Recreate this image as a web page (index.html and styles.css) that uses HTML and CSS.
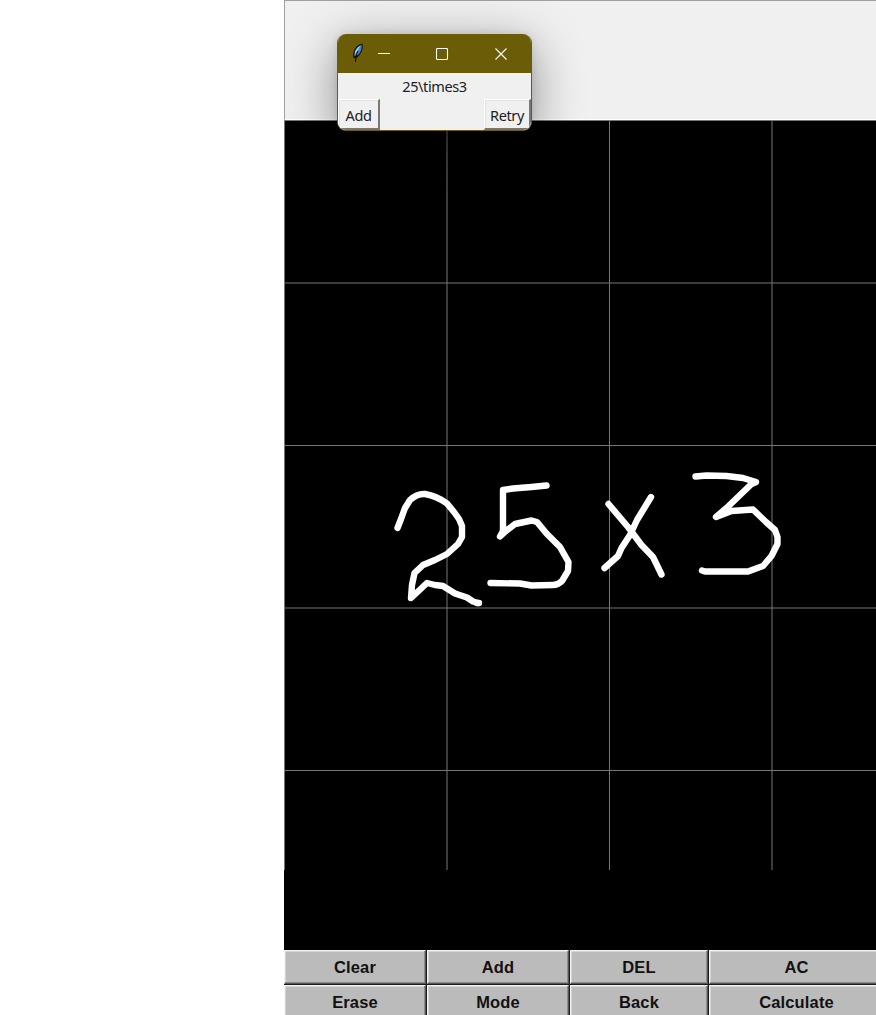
FILE: index.html
```
<!DOCTYPE html>
<html lang="en">
<head>
<meta charset="utf-8">
<title>Handwriting calculator</title>
<link rel="stylesheet" href="styles.css">
</head>
<body>
<main class="app">
  <header class="display"></header>
  <svg class="board" viewBox="284 120 592 830" aria-label="Drawing board">
    <path class="grid" d="M284.5 121V870M447 121V870M609.5 121V870M772 121V870M284 120.5H876M284 283H876M284 445.5H876M284 608H876M284 770.5H876"/>
    <g class="ink">
      <path d="M397.500 528L401 519L405 508L410 500Q417 493.500 425 494Q437 496 447 503.500L454 512L459 519L462 526V537L458 544L447 554L435 560L423 565L414.500 573L412 585L411 598L427 583L435 585L443 586L455 593.500L467 597.500L473 601.500L478 603"/>
      <path d="M546.500 485.500L531.500 487L513 488.500L503 490V531L500 536.500L506 531L515 524L531.500 520.500L537 522L546.500 533.500L560 547L568.500 562L568 571L562 581Q558 585 553 585L531.500 585.500L520 583.500L490.500 583"/>
      <path d="M608.500 504L628 527L641.500 545L653 557L661.500 574.500M651 497L637 520L630 535L621.500 548L618 556L604.500 568"/>
      <path d="M695.500 476.500L706.500 475.500L726.500 476L743 478L756 482L751.500 484L726.500 508L716 517L731.500 511L753 509.500L766 522L775 530L777.500 537V544L771.500 556L763 566L748 571.500H705L702 570.500"/>
      <path d="M477 603H479"/>
    </g>
  </svg>
  <div class="keys">
    <button class="key">Clear</button><button class="key">Add</button><button class="key">DEL</button><button class="key">AC</button>
    <button class="key">Erase</button><button class="key">Mode</button><button class="key">Back</button><button class="key">Calculate</button>
  </div>
</main>
<section class="dialog">
  <div class="titlebar">
    <svg class="feather" viewBox="0 0 14 22">
      <path d="M2.500 16C1.500 11 3 7 6 4Q8.500 1.500 11.500 1.500Q12.800 7 9 12.500Q7 15.500 4.500 16.500Z" fill="#17160d"/>
      <path d="M3.500 14Q3 9 6 6Q8.500 3 10.800 3Q11 8 8 12Q6 14 3.500 14Z" fill="#4a86cc"/>
      <path d="M3.800 12.500Q3.500 9 6.500 6L9.500 3.500Q7 8 3.800 12.500Z" fill="#b8dcf4"/>
      <path d="M7 9Q5 12 4.500 20" fill="none" stroke="#10130f" stroke-width="1.100"/>
    </svg>
    <svg class="controls" viewBox="0 0 130 12">
      <path d="M0 5.500H12"/>
      <rect x="58.500" y=".5" width="11" height="11" rx="1"/>
      <path d="M117.500 .5L128.500 11.500M128.500 .5L117.500 11.500"/>
    </svg>
  </div>
  <div class="result">25\times3</div>
  <div class="actions">
    <button class="action add">Add</button>
    <button class="action retry">Retry</button>
  </div>
</section>
</body>
</html>
```
FILE: styles.css
```
* { box-sizing: border-box; }
body { margin: 0; width: 876px; height: 1015px; overflow: hidden; background: #fff; }
.app { margin-left: 284px; width: 592px; height: 1015px; overflow: hidden; background: #000; }
.display { height: 120px; background: #f0f0f0; border: solid #a0a0a0; border-width: 1px 0 0 1px; border-bottom: 1px solid #fff; }
.board { display: block; width: 592px; height: 830px; background: #000; }
.grid { fill: none; stroke: #777; stroke-width: 1; }
.ink { fill: none; stroke: #fff; stroke-width: 6.4; stroke-linecap: round; stroke-linejoin: round; }
.keys { display: grid; width: 601px; grid-template-columns: 143px 143px 139px 176px; grid-template-rows: 35px 35px; background: #1b1b1b; }
.key {
  margin: 0 1px 1px 0; padding: 1px 0 0;
  border: solid 1px; border-color: #f4f4f4 #555 #555 #f4f4f4;
  box-shadow: inset -1px -1px #8c8c8c, inset 1px 1px #d5d5d5;
  background: #bbb; color: #111;
  font: bold 16.5px "Liberation Sans", Arial, sans-serif; letter-spacing: .15px;
}
.dialog {
  position: absolute; left: 337px; top: 34px; width: 195px; height: 97px;
  border: 1px solid #6b5d08; border-top: 0; border-radius: 9px; overflow: hidden;
  background: #f0f0f0; box-shadow: 0 12px 50px rgba(0,0,0,.42), 0 0 8px rgba(0,0,0,.1);
}
.titlebar { display: flex; align-items: center; height: 39px; padding: 1px 0 0 13px; background: #6b5d08; }
.feather { width: 14px; height: 22px; margin-top: -3px; }
.controls { width: 130px; height: 12px; margin-left: 13px; fill: none; stroke: #fff; stroke-width: 1.1; }
.result, .action { font-family: "Noto Sans", "Open Sans", sans-serif; font-size: 14.5px; letter-spacing: -.4px; color: #202020; }
.result { height: 26px; line-height: 27px; text-align: center; }
.actions { display: flex; justify-content: space-between; height: 31px; }
.action { padding: 2px 0 0; background: #f0f0f0; border: solid; border-width: 1px 2px 2px 1px; border-color: #fff #777 #777 #fff; box-shadow: inset 1px 1px #e3e3e3; }
.add { width: 42px; }
.retry { width: 47px; }
```
